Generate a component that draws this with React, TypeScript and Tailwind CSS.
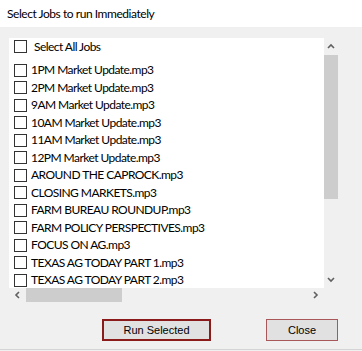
import React from "react";

const items = [
  "1PM Market Update.mp3",
  "2PM Market Update.mp3",
  "9AM Market Update.mp3",
  "10AM Market Update.mp3",
  "11AM Market Update.mp3",
  "12PM Market Update.mp3",
  "AROUND THE CAPROCK.mp3",
  "CLOSING MARKETS.mp3",
  "FARM BUREAU ROUNDUP.mp3",
  "FARM POLICY PERSPECTIVES.mp3",
  "FOCUS ON AG.mp3",
  "TEXAS AG TODAY PART 1.mp3",
  "TEXAS AG TODAY PART 2.mp3",
];

function Box() {
  return <div className="w-[13px] h-[13px] shrink-0 border border-[#333333] bg-white" />;
}

function Chevron({ dir }: { dir: "up" | "down" | "left" | "right" }) {
  const d = {
    up: "M1 5 L4 2 L7 5",
    down: "M1 2 L4 5 L7 2",
    left: "M5 1 L2 4 L5 7",
    right: "M2 1 L5 4 L2 7",
  }[dir];
  return (
    <svg width="8" height="8" viewBox="0 0 8 8">
      <path d={d} fill="none" stroke="#606060" strokeWidth="1.6" />
    </svg>
  );
}

export default function App() {
  return (
    <div
      className="w-[362px] h-[351px] bg-[#f0f0f0] flex flex-col text-black overflow-hidden"
      style={{ fontFamily: 'Lato, "Noto Sans", sans-serif' }}
    >
      <div className="h-[27px] bg-white flex items-center pl-[7px] text-[12px] tracking-[-0.45px] shrink-0">
        Select Jobs to run Immediately
      </div>
      <div className="pt-[11px] pl-[9px]">
        <div className="flex w-[332px] h-[267px]">
          <div className="flex flex-col w-[315px]">
            <div className="h-[250px] bg-white overflow-hidden pl-[5px] text-[12px] tracking-[-0.55px]">
              <div className="h-[17.5px] flex items-center gap-[7px]">
                <Box />
                <span>Select All Jobs</span>
              </div>
              <div className="mt-[6px]">
                {items.map((t) => (
                  <div key={t} className="h-[17.5px] flex items-center gap-[4px] whitespace-nowrap">
                    <Box />
                    <span>{t}</span>
                  </div>
                ))}
              </div>
            </div>
            <div className="h-[17px] flex items-start">
              <div className="w-[17px] h-[14px] flex items-center justify-center">
                <Chevron dir="left" />
              </div>
              <div className="w-[96px] h-[14px] bg-[#cdcdcd]" />
              <div className="flex-1" />
              <div className="w-[17px] h-[14px] flex items-center justify-center">
                <Chevron dir="right" />
              </div>
            </div>
          </div>
          <div className="w-[17px] flex flex-col">
            <div className="w-[14px] h-[17px] flex items-center justify-center">
              <Chevron dir="up" />
            </div>
            <div className="w-[14px] h-[144px] bg-[#cdcdcd]" />
            <div className="flex-1" />
            <div className="w-[14px] h-[17px] flex items-center justify-center">
              <Chevron dir="down" />
            </div>
            <div className="h-[17px]" />
          </div>
        </div>
        <div className="flex mt-[14px]" style={{ fontFamily: '"Liberation Sans", Arial, sans-serif' }}>
          <div className="ml-[93px] w-[109px] h-[22px] border-2 border-[#8b1a1a] bg-[#e1e1e1] flex items-center justify-center text-[11px]">
            Run Selected
          </div>
          <div className="ml-[55px] w-[72px] h-[22px] border border-[#a85858] bg-[#e1e1e1] flex items-center justify-center text-[11px]">
            Close
          </div>
        </div>
      </div>
      <div className="mt-auto h-[2px] border-t border-[#d4d4d4] bg-[#f0f0f0]" />
    </div>
  );
}
